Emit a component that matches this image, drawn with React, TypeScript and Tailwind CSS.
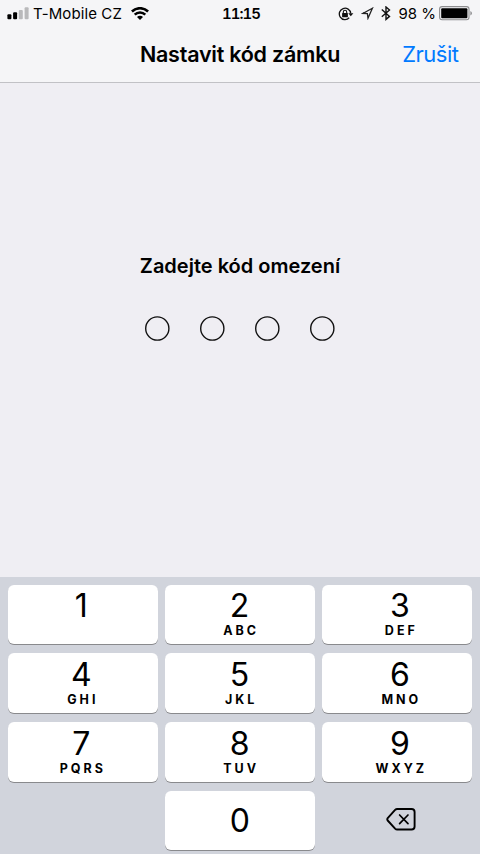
const keys = [
  { digit: '1', letters: '' },
  { digit: '2', letters: 'ABC' },
  { digit: '3', letters: 'DEF' },
  { digit: '4', letters: 'GHI' },
  { digit: '5', letters: 'JKL' },
  { digit: '6', letters: 'MNO' },
  { digit: '7', letters: 'PQRS' },
  { digit: '8', letters: 'TUV' },
  { digit: '9', letters: 'WXYZ' },
];

const columnNudge = ['pr-[3px]', 'pr-px', 'pl-[5px]'];

function SignalIcon() {
  return (
    <svg width="22" height="14" viewBox="0 0 22 14">
      <rect x="0.4" y="7.2" width="4" height="5" rx="1" fill="#000" />
      <rect x="6.1" y="5.3" width="4" height="6.9" rx="1" fill="#000" />
      <rect x="11.8" y="2.9" width="4" height="9.3" rx="1" fill="#b9b9bb" />
      <rect x="17.6" y="0.2" width="4" height="12" rx="1" fill="#b9b9bb" />
    </svg>
  );
}

function WifiIcon() {
  return (
    <svg width="18" height="14" viewBox="0 0 18 14" fill="none" stroke="#000" strokeWidth="2.5">
      <path d="M0.9 4.5A11.5 11.5 0 0 1 17.1 4.5" />
      <path d="M3.7 7.7A7.5 7.5 0 0 1 14.3 7.7" />
      <path d="M9 13L6 10.1A4 4 0 0 1 12 10.1Z" fill="#000" stroke="none" />
    </svg>
  );
}

function RotationLockIcon() {
  return (
    <svg width="16" height="14" viewBox="0 0 16 14" fill="none" stroke="#111" strokeWidth="1.3">
      <path d="M11.2 10.8A5.7 5.7 0 1 1 12.7 6.4" />
      <path d="M10.3 6.2H15.4L12.8 9.2Z" fill="#111" stroke="none" />
      <rect x="4.1" y="5.9" width="5.8" height="4.3" rx="0.5" fill="#111" stroke="none" />
      <path d="M5.3 6.3V5A1.7 1.7 0 0 1 8.7 5V6.3" strokeWidth="1.1" />
    </svg>
  );
}

function LocationIcon() {
  return (
    <svg width="13" height="13" viewBox="0 0 13 13" fill="none" stroke="#222" strokeWidth="1.3" strokeLinejoin="miter">
      <path d="M11.4 1.2L1.8 6.5L6.4 6.6L7 11.2Z" />
    </svg>
  );
}

function BluetoothIcon() {
  return (
    <svg width="10" height="15" viewBox="0 0 10 15" fill="none" stroke="#111" strokeWidth="1.4">
      <path d="M0.8 3.6L8.5 10.4L5 13.4V1L8.5 4L0.8 10.8" />
    </svg>
  );
}

function BatteryIcon() {
  return (
    <svg width="34" height="15" viewBox="0 0 34 15">
      <rect x="0.6" y="0.6" width="29.4" height="13.2" rx="2.5" fill="none" stroke="#8d8d8f" strokeWidth="1.1" />
      <rect x="2.2" y="2.2" width="26.2" height="10" rx="1" fill="#000" />
      <path d="M31.4 5V9.6C33.5 8.6 33.5 6 31.4 5Z" fill="#8d8d8f" />
    </svg>
  );
}

function BackspaceIcon() {
  return (
    <svg width="30" height="23" viewBox="0 0 30 23" fill="none" stroke="#000" strokeWidth="1.9" strokeLinejoin="round" strokeLinecap="round">
      <path d="M11.2 1H25.5Q28.6 1 28.6 4.1V18.4Q28.6 21.5 25.5 21.5H11.2Q10 21.5 9.1 20.6L1.7 12.5Q0.8 11.3 1.7 10.1L9.1 1.9Q10 1 11.2 1Z" />
      <path d="M13.6 7L22 15.6M22 7L13.6 15.6" strokeWidth="1.7" />
    </svg>
  );
}

export default function App() {
  return (
    <div className="flex h-[854px] w-[480px] flex-col overflow-hidden bg-[#efeef3] font-['Inter','Liberation_Sans',sans-serif] text-black">
      <header className="h-[83px] border-b border-[#c1c1c5] bg-[#f5f5f7]">
        <div className="grid h-[27px] grid-cols-[1fr_auto_1fr] items-center px-[7px] text-[15px] leading-[27px]">
          <div className="flex items-center">
            <SignalIcon />
            <span className="ml-[4px] tracking-[0.1px]">T-Mobile CZ</span>
            <span className="ml-[9px]"><WifiIcon /></span>
          </div>
          <span className="pl-[2px] font-semibold tracking-[-1px] tabular-nums">11:15</span>
          <div className="flex items-center justify-end">
            <RotationLockIcon />
            <span className="ml-[7px]"><LocationIcon /></span>
            <span className="ml-[7px]"><BluetoothIcon /></span>
            <span className="ml-[7px]">98 %</span>
            <span className="ml-[3px]"><BatteryIcon /></span>
          </div>
        </div>
        <div className="grid h-[54px] grid-cols-[1fr_auto_1fr] items-center px-[21px]">
          <span />
          <h1 className="text-[21.5px] font-semibold tracking-[-0.23px]">Nastavit kód zámku</h1>
          <button className="justify-self-end pr-[0.6px] text-[22px] tracking-[-0.5px] text-[#007aff]">Zrušit</button>
        </div>
      </header>

      <main className="flex flex-1 flex-col items-center pt-[168px]">
        <h2 className="text-[20px] leading-[30px] font-semibold">Zadejte kód omezení</h2>
        <div className="mt-[35px] flex gap-[30px] pr-px">
          {[0, 1, 2, 3].map((i) => (
            <svg key={i} width="25" height="25" viewBox="0 0 25 25">
              <circle cx="12.3" cy="12.5" r="11.6" fill="none" stroke="#111" strokeWidth="1.4" />
            </svg>
          ))}
        </div>
      </main>

      <section className="grid h-[277px] grid-cols-[150px_150px_150px] grid-rows-[59px_60px_60px_59px] gap-x-[7.25px] gap-y-[9px] bg-[#d1d4dc] pt-[8px] pl-[7.6px]">
        {keys.map((key, i) => (
          <button key={key.digit} className={`flex flex-col items-center rounded-[6px] bg-white shadow-[0_1px_0_#898a8d] ${columnNudge[i % 3]}`}>
            <span className={`text-[32px] leading-[37px] tracking-[-0.5px] ${i < 3 ? 'mt-[2px]' : 'mt-[3px]'}`}>{key.digit}</span>
            <span className="pl-[3.5px] text-[12.5px] leading-[14px] font-bold tracking-[3px]">{key.letters}</span>
          </button>
        ))}
        <span />
        <button className="flex items-center justify-center rounded-[6px] bg-white pb-px text-[32px] leading-[37px] shadow-[0_1px_0_#898a8d]">0</button>
        <button className="flex items-center justify-center pb-[2px] pl-[8px]">
          <BackspaceIcon />
        </button>
      </section>
    </div>
  );
}
